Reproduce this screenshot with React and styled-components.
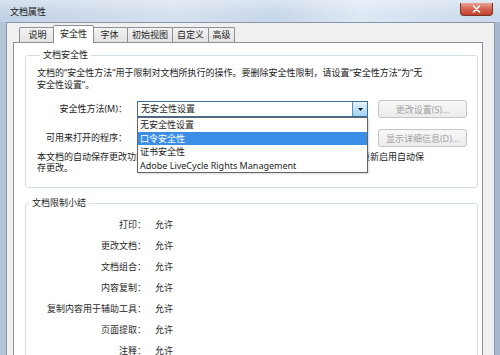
import React from "react";
import styled, { createGlobalStyle } from "styled-components";

const GlobalStyle = createGlobalStyle`
  html, body {
    margin: 0;
    padding: 0;
    background: #f0f0f0;
  }
  body {
    font-family: "Noto Sans", "Noto Sans CJK SC", sans-serif;
    font-size: 9px;
    color: #1e1e1e;
  }
`;

const Window = styled.div`
  width: 500px;
  height: 355px;
  overflow: hidden;
  display: flex;
  flex-direction: column;
  background: linear-gradient(to right, #b4c4d9, #c3d1e3 50%, #a9b8cc);
`;

const TitleBar = styled.div`
  height: 22px;
  flex: none;
  display: flex;
  align-items: flex-start;
  padding: 0 7px 0 10px;
  background:
    linear-gradient(to bottom, rgba(255, 255, 255, 0.35), rgba(255, 255, 255, 0) 70%),
    linear-gradient(100deg, #c2d1e5 0%, #d5e1ef 35%, #c7d6e9 55%, #dde8f4 72%, #c9d8ea 100%);
`;

const Title = styled.span`
  margin-top: 6px;
  line-height: 12px;
  color: #1a1a1a;
`;

const CloseButton = styled.div`
  margin-left: auto;
  margin-top: 3px;
  width: 33px;
  height: 13px;
  box-sizing: border-box;
  border: 1px solid #7d3128;
  border-top: none;
  border-radius: 0 0 4px 4px;
  background: linear-gradient(to bottom, #e8a595, #d4624f 50%, #c2412f);
  display: flex;
  align-items: center;
  justify-content: center;
`;

const Frame = styled.div`
  flex: 1;
  min-height: 0;
  display: flex;
  padding: 0 5px 0 6px;
`;

const Client = styled.div`
  flex: 1;
  min-height: 0;
  display: flex;
  flex-direction: column;
  background: #f0f0f0;
  border: 1px solid #8797ab;
  border-bottom: none;
  padding: 2px 11px 0 6px;
`;

const TabRow = styled.div`
  display: flex;
  align-items: flex-end;
  height: 17px;
  padding-left: 6px;
  flex: none;
`;

const Tab = styled.div`
  width: ${(p) => p.$w}px;
  height: ${(p) => (p.$active ? 18 : 15)}px;
  box-sizing: border-box;
  border: 1px solid #8e9096;
  border-bottom: none;
  border-radius: 2px 2px 0 0;
  margin: ${(p) => (p.$active ? "0 -2px -1px -3px" : "0 0 0 -1px")};
  padding-bottom: ${(p) => (p.$active ? 2 : 0)}px;
  background: ${(p) =>
    p.$active ? "#ffffff" : "linear-gradient(to bottom, #f3f3f3, #e2e2e2)"};
  position: relative;
  z-index: ${(p) => (p.$active ? 2 : 1)};
  display: flex;
  align-items: center;
  justify-content: center;
  line-height: 12px;
  color: #1e1e1e;

  &:first-child {
    margin-left: 0;
  }
`;

const Panel = styled.div`
  flex: 1;
  min-height: 0;
  background: #ffffff;
  border: 1px solid #8e9096;
  border-bottom: none;
  padding: 0 4px 0 11px;
`;

const Group = styled.fieldset`
  margin: ${(p) => p.$top}px 0 0;
  padding: ${(p) => p.$pad};
  border: 1px solid #d5dfe5;
  border-radius: 3px;
  min-width: 0;
`;

const Legend = styled.legend`
  margin-left: 3px;
  padding: 0 3px;
  line-height: 12px;
  color: #1e1e1e;
`;

const Text = styled.p`
  margin: ${(p) => p.$mt || 0}px 0 0;
  line-height: ${(p) => p.$lh || 12}px;
  white-space: nowrap;
  color: #222;
`;

const SettingRow = styled.div`
  display: grid;
  grid-template-columns: 90px 231px 89px;
  column-gap: 10px;
  align-items: center;
  height: 18px;
  margin-top: ${(p) => p.$mt}px;
`;

const Label = styled.span`
  text-align: right;
  line-height: 12px;
  white-space: nowrap;
  color: #222;
`;

const SelectWrap = styled.div`
  position: relative;
  height: 16px;
`;

const SelectBox = styled.div`
  height: 16px;
  box-sizing: border-box;
  border: 1px solid #3c6f9f;
  display: flex;
  align-items: stretch;
  background: #fff;
`;

const SelectValue = styled.span`
  flex: 1;
  padding-left: 3px;
  line-height: 14px;
  color: #1e1e1e;
`;

const Arrow = styled.span`
  width: 14px;
  border-left: 1px solid #5c8fbf;
  background: linear-gradient(to bottom, #e6f4fc, #bfe2f7 50%, #a2d2f1);
  display: flex;
  align-items: center;
  justify-content: center;
`;

const DropList = styled.ul`
  position: absolute;
  top: 100%;
  left: 0;
  width: 100%;
  box-sizing: border-box;
  margin: 0;
  padding: 0;
  list-style: none;
  border: 1px solid #646464;
  background: #fff;
  z-index: 5;
  box-shadow: 1px 1px 2px rgba(0, 0, 0, 0.15);
`;

const DropItem = styled.li`
  height: 13.5px;
  line-height: 13.5px;
  padding-left: 2px;
  white-space: nowrap;
  background: ${(p) => (p.$selected ? "#3a8ee6" : "transparent")};
  color: ${(p) => (p.$selected ? "#ffffff" : "#1e1e1e")};
`;

const DisabledButton = styled.div`
  height: 18px;
  box-sizing: border-box;
  border: 1px solid #c3c6c9;
  border-radius: 3px;
  background: linear-gradient(to bottom, #f7f7f7, #ececec);
  color: #a2a2a2;
  display: flex;
  align-items: center;
  justify-content: center;
  white-space: nowrap;
`;

const SummaryGrid = styled.div`
  display: grid;
  grid-template-columns: 120px auto;
  column-gap: 9px;
  grid-auto-rows: 21px;
  align-items: center;
  padding-top: 5px;
`;

const SummaryLabel = styled.span`
  text-align: right;
  white-space: nowrap;
  line-height: 12px;
  color: #2a2a2a;
`;

const SummaryValue = styled.span`
  line-height: 12px;
  color: #2a2a2a;
`;

const tabs = [
  { name: "说明", w: 37 },
  { name: "安全性", w: 41, active: true },
  { name: "字体", w: 37 },
  { name: "初始视图", w: 46 },
  { name: "自定义", w: 37 },
  { name: "高级", w: 27 },
];

const methods = [
  "无安全性设置",
  "口令安全性",
  "证书安全性",
  "Adobe LiveCycle Rights Management",
];

const summary = [
  "打印",
  "更改文档",
  "文档组合",
  "内容复制",
  "复制内容用于辅助工具",
  "页面提取",
  "注释",
];

const App = () => {
  return (
    <>
      <GlobalStyle />
      <Window>
        <TitleBar>
          <Title>文档属性</Title>
          <CloseButton>
            <svg width="9" height="8" viewBox="0 0 9 8">
              <path d="M1.5 1 L7.5 7 M7.5 1 L1.5 7" stroke="#fff" strokeWidth="1.6" strokeLinecap="round" />
            </svg>
          </CloseButton>
        </TitleBar>
        <Frame>
          <Client>
            <TabRow>
              {tabs.map((t) => (
                <Tab key={t.name} $w={t.w} $active={t.active}>
                  {t.name}
                </Tab>
              ))}
            </TabRow>
            <Panel>
              <Group $top={6} $pad="6px 10px 14px 11px">
                <Legend>文档安全性</Legend>
                <Text>
                  文档的“安全性方法”用于限制对文档所执行的操作。要删除安全性限制，请设置“安全性方法”为“无
                  <br />
                  安全性设置”。
                </Text>
                <SettingRow $mt={9}>
                  <Label>安全性方法(M)：</Label>
                  <SelectWrap>
                    <SelectBox>
                      <SelectValue>无安全性设置</SelectValue>
                      <Arrow>
                        <svg width="5" height="3" viewBox="0 0 5 3">
                          <path d="M0 0 H5 L2.5 3 Z" fill="#1a1a1a" />
                        </svg>
                      </Arrow>
                    </SelectBox>
                    <DropList>
                      {methods.map((m, i) => (
                        <DropItem key={m} $selected={i === 1}>
                          {m}
                        </DropItem>
                      ))}
                    </DropList>
                  </SelectWrap>
                  <DisabledButton>更改设置(S)...</DisabledButton>
                </SettingRow>
                <SettingRow $mt={11}>
                  <Label>可用来打开的程序：</Label>
                  <span />
                  <DisabledButton>显示详细信息(D)...</DisabledButton>
                </SettingRow>
                <Text $mt={4} $lh={11}>
                  本文档的自动保存更改功能已被禁用，因为本文档已应用了文档安全性设置。如要重新启用自动保
                  <br />
                  存更改。
                </Text>
              </Group>
              <Group $top={9} $pad="0 10px 10px 0">
                <Legend>文档限制小结</Legend>
                <SummaryGrid>
                  {summary.map((s) => (
                    <React.Fragment key={s}>
                      <SummaryLabel>{s}：</SummaryLabel>
                      <SummaryValue>允许</SummaryValue>
                    </React.Fragment>
                  ))}
                </SummaryGrid>
              </Group>
            </Panel>
          </Client>
        </Frame>
      </Window>
    </>
  );
};

export default App;
